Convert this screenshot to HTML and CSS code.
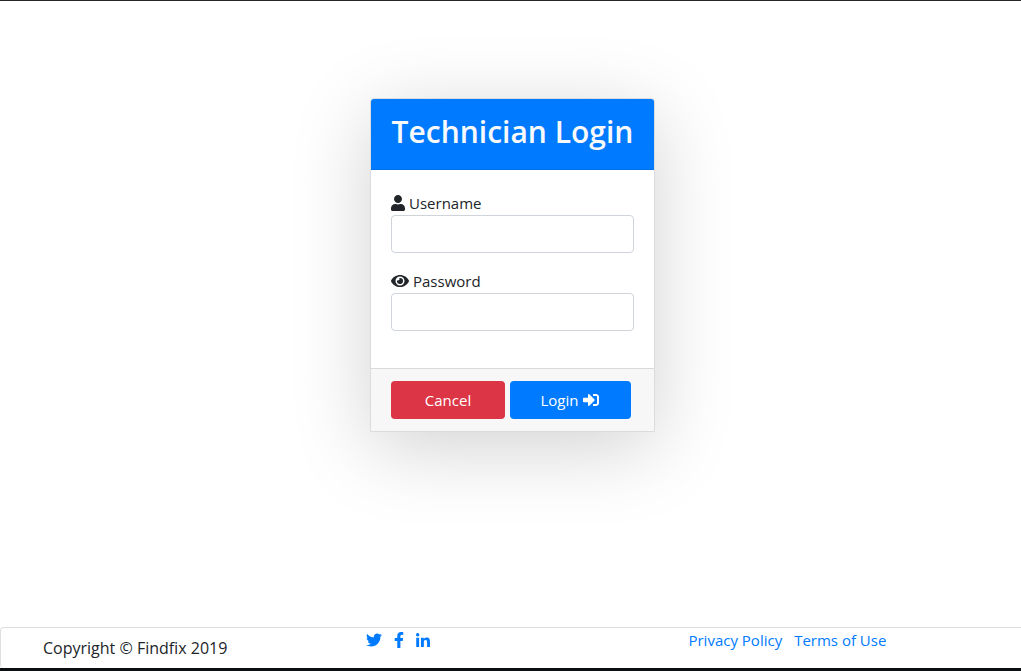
FILE: index.html
```html
<!DOCTYPE html>
<html lang="en">
<head>
<meta charset="utf-8">
<meta name="viewport" content="width=device-width, initial-scale=1">
<title>Technician Login</title>
<link rel="stylesheet" href="styles.css">
</head>
<body>
<main class="page-main">
  <form class="card">
    <header class="card-header"><h1 class="card-title">Technician Login</h1></header>
    <div class="card-body">
      <div class="field">
        <label class="field-label" for="username">
          <svg class="icon icon-narrow" viewBox="0 0 448 512" aria-hidden="true"><path d="M224 256c70.700 0 128-57.300 128-128S294.700 0 224 0 96 57.300 96 128s57.300 128 128 128zm89.600 32h-16.700c-22.200 10.200-46.900 16-72.900 16s-50.600-5.800-72.900-16h-16.700C60.200 288 0 348.200 0 422.400V464c0 26.500 21.500 48 48 48h352c26.500 0 48-21.500 48-48v-41.600c0-74.200-60.200-134.400-134.400-134.400z"/></svg>
          <span>Username</span>
        </label>
        <input class="field-input" id="username" name="username" type="text">
      </div>
      <div class="field">
        <label class="field-label" for="password">
          <svg class="icon icon-wide" viewBox="0 0 576 512" aria-hidden="true"><path d="M572.520 241.400C518.290 135.590 410.930 64 288 64S57.680 135.640 3.480 241.410a32.350 32.350 0 0 0 0 29.190C57.710 376.410 165.070 448 288 448s230.320-71.640 284.520-177.410a32.350 32.350 0 0 0 0-29.190zM288 400a144 144 0 1 1 144-144 143.930 143.930 0 0 1-144 144zm0-240a95.310 95.310 0 0 0-25.310 3.790 47.850 47.850 0 0 1-66.900 66.900A95.780 95.780 0 1 0 288 160z"/></svg>
          <span>Password</span>
        </label>
        <input class="field-input" id="password" name="password" type="password">
      </div>
    </div>
    <div class="card-footer">
      <button class="btn btn-danger" type="button">Cancel</button>
      <button class="btn btn-primary" type="submit"><span>Login</span>
        <svg class="icon icon-wide" viewBox="0 0 512 512" aria-hidden="true"><path d="M416 448h-84c-6.600 0-12-5.400-12-12v-40c0-6.600 5.400-12 12-12h84c17.700 0 32-14.300 32-32V160c0-17.700-14.300-32-32-32h-84c-6.600 0-12-5.400-12-12V76c0-6.600 5.400-12 12-12h84c53 0 96 43 96 96v192c0 53-43 96-96 96zm-47-209L201 71c-15-15-41-4.500-41 17v96H24c-13.300 0-24 10.700-24 24v96c0 13.300 10.700 24 24 24h136v96c0 21.500 26 32 41 17l168-168c9.300-9.400 9.300-24.600 0-34z"/></svg>
      </button>
    </div>
  </form>
</main>
<footer class="page-footer">
  <p class="copyright">Copyright © Findfix 2019</p>
  <nav class="social" aria-label="Social">
    <a class="link" href="#twitter" aria-label="Twitter"><svg class="icon" viewBox="0 0 512 512" aria-hidden="true"><path d="M459.370 151.716c.325 4.548.325 9.097.325 13.645 0 138.720-105.583 298.558-298.558 298.558-59.452 0-114.680-17.219-161.137-47.106 8.447.974 16.568 1.299 25.340 1.299 49.055 0 94.213-16.568 130.274-44.832-46.132-.975-84.792-31.188-98.112-72.772 6.498.974 12.995 1.624 19.818 1.624 9.421 0 18.843-1.300 27.614-3.573-48.081-9.747-84.143-51.980-84.143-102.985v-1.299c13.969 7.797 30.214 12.670 47.431 13.319-28.264-18.843-46.781-51.005-46.781-87.391 0-19.492 5.197-37.360 14.294-52.954 51.655 63.675 129.300 105.258 216.365 109.807-1.624-7.797-2.599-15.918-2.599-24.040 0-57.828 46.782-104.934 104.934-104.934 30.213 0 57.502 12.670 76.670 33.137 23.715-4.548 46.456-13.320 66.599-25.340-7.798 24.366-24.366 44.833-46.132 57.827 21.117-2.273 41.584-8.122 60.426-16.243-14.292 20.791-32.161 39.308-52.628 54.253z"/></svg></a>
    <a class="link" href="#facebook" aria-label="Facebook"><svg class="icon icon-slim" viewBox="0 0 320 512" aria-hidden="true"><path d="M279.140 288l14.220-92.660h-88.910v-60.130c0-25.350 12.420-50.060 52.240-50.060h40.420V6.260S260.430 0 225.360 0c-73.220 0-121.080 44.380-121.080 124.720v70.620H22.890V288h81.390v224h100.170V288z"/></svg></a>
    <a class="link" href="#linkedin" aria-label="LinkedIn"><svg class="icon icon-narrow" viewBox="0 0 448 448" aria-hidden="true"><path d="M100.280 448H7.400V148.900h92.880zM53.790 108.100C24.090 108.100 0 83.500 0 53.800a53.790 53.790 0 0 1 107.580 0c0 29.700-24.100 54.300-53.790 54.300zM447.900 448h-92.680V302.400c0-34.700-.7-79.200-48.290-79.200-48.290 0-55.690 37.700-55.690 76.700V448h-92.780V148.900h89.080v40.800h1.300c12.400-23.500 42.690-48.300 87.880-48.300 94 0 111.280 61.900 111.280 142.300V448z"/></svg></a>
  </nav>
  <nav class="legal" aria-label="Legal">
    <a class="link" href="#privacy">Privacy Policy</a>
    <a class="link" href="#terms">Terms of Use</a>
  </nav>
</footer>
</body>
</html>
```

FILE: styles.css
```css
*, *::before, *::after { box-sizing: border-box; }

body {
  display: flex;
  flex-direction: column;
  min-height: 100vh;
  margin: 0;
  border-top: 1px solid #262626;
  border-bottom: 3px solid #0d0e10;
  background: #fff;
  color: #212529;
  font: 15px/24px "Segoe UI", "Open Sans", "Noto Sans", sans-serif;
}

.page-main {
  display: flex;
  flex: 1;
  justify-content: center;
  align-items: flex-start;
  padding: 97px 16px 64px 20px;
}

.card {
  width: 100%;
  max-width: 285px;
  border: 1px solid #dcdcdf;
  border-radius: 4px 4px 0 0;
  background: #fff;
  box-shadow: 0 16px 80px rgba(0, 0, 0, 0.18);
}

.card-header {
  padding: 13px 20px 18px;
  border-bottom: 1px solid #0070e6;
  border-radius: 3px 3px 0 0;
  background: #007bff;
  color: #f8f9fa;
  text-align: center;
}

.card-title {
  margin: 0;
  font-size: 30px;
  font-weight: 600;
  line-height: 39px;
  white-space: nowrap;
}

.card-body { padding: 21px 20px; }

.field { margin-bottom: 16px; }

.field-label {
  display: flex;
  align-items: center;
  gap: 4px;
}

.field-input {
  display: block;
  width: 100%;
  height: 38px;
  padding: 6px 12px;
  border: 1px solid #ced4da;
  border-radius: 4px;
  background: #fff;
  color: #495057;
  font: inherit;
}

.card-footer {
  display: flex;
  gap: 5px;
  padding: 12px 23px 12px 20px;
  border-top: 1px solid #d9d9d9;
  background: #f7f7f7;
}

.btn {
  display: flex;
  flex: 114 1 0;
  justify-content: center;
  align-items: center;
  gap: 4px;
  height: 38px;
  padding: 0;
  border: 0;
  border-radius: 4px;
  color: #fff;
  font: inherit;
  cursor: pointer;
}

.btn-danger { background: #dc3545; }

.btn-primary {
  flex-grow: 121;
  background: #007bff;
}

.icon {
  display: block;
  width: 16px;
  height: 16px;
  fill: currentColor;
}

.icon-narrow { width: 14px; }
.icon-wide { width: 18px; }
.icon-slim { width: 10px; }

.page-footer {
  display: grid;
  grid-template-columns: 33% 33% 1fr;
  padding-left: 42px;
  border: 1px solid #dfdfdf;
  border-width: 1px 0 0 1px;
  border-radius: 4px 0 0 4px;
}

.copyright {
  margin: 0;
  padding: 8px 0;
  font-size: 16px;
}

.social,
.legal {
  display: flex;
  align-items: flex-start;
}

.social {
  gap: 12px;
  padding-top: 4px;
}

.legal { gap: 12px; }

.link {
  color: #007bff;
  text-decoration: none;
}
```
